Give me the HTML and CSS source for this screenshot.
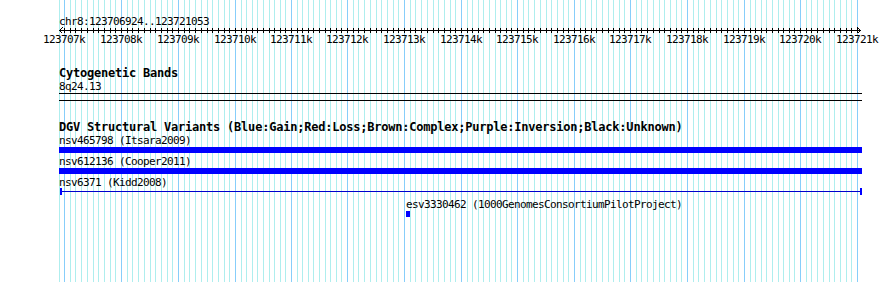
FILE: index.html
```html
<!DOCTYPE html>
<html lang="en">
<head>
    <meta charset="UTF-8">
    <title>chr8:123706924..123721053</title>
    <link rel="stylesheet" href="styles.css">
</head>
<body>
    <div class="panel">
        <!-- grid lines are drawn by script.js -->
        <svg class="grid" id="grid" width="890" height="282"></svg>

        <div class="tracks">
            <div class="track ruler">
                <div class="label">chr8:123706924..123721053</div>
                <svg class="axis" id="axis" width="803" height="7"></svg>
                <div class="scale" id="scale"></div>
            </div>

            <div class="track">
                <div class="title">Cytogenetic Bands</div>
                <div class="label">8q24.13</div>
                <div class="band"></div>
            </div>

            <div class="track">
                <div class="title">DGV Structural Variants (Blue:Gain;Red:Loss;Brown:Complex;Purple:Inversion;Black:Unknown)</div>

                <div class="feature">
                    <div class="label">nsv465798 (Itsara2009)</div>
                    <div class="bar"></div>
                </div>

                <div class="feature">
                    <div class="label">nsv612136 (Cooper2011)</div>
                    <div class="bar"></div>
                </div>

                <div class="feature">
                    <div class="label">nsv6371 (Kidd2008)</div>
                    <div class="span"></div>
                </div>

                <div class="feature" style="margin-left: 347px;">
                    <div class="label">esv3330462 (1000GenomesConsortiumPilotProject)</div>
                    <div class="block"></div>
                </div>
            </div>
        </div>
    </div>

    <script src="script.js"></script>
</body>
</html>
```

FILE: styles.css
```css
body {
    margin: 0;
    background: #fff;
    color: #000;
    font-family: "DejaVu Sans Mono", monospace;
}

.panel {
    position: relative;
    width: 890px;
    height: 282px;
    overflow: hidden;
}

.grid {
    position: absolute;
    top: 0;
    left: 0;
    shape-rendering: crispEdges;
}

.grid .minor {
    stroke: #aeeeee;
}

.grid .major {
    stroke: #87cefa;
}

.tracks {
    position: relative;
    width: 803px;
    margin-left: 59px;
    padding-top: 15px;
}

.label {
    font-size: 11px;
    letter-spacing: -0.62px;
    line-height: 13px;
    height: 13px;
    white-space: nowrap;
}

.title {
    font-size: 12px;
    font-weight: bold;
    letter-spacing: -0.22px;
    line-height: 13px;
    height: 13px;
    white-space: nowrap;
}

.track + .track {
    margin-top: 21px;
}

.track + .track + .track {
    margin-top: 20px;
}

/* ruler */
.axis {
    display: block;
    margin-top: -1px;
    overflow: visible;
    shape-rendering: crispEdges;
}

.axis line,
.axis polyline {
    stroke: #000;
    stroke-width: 1;
    fill: none;
}

.scale {
    position: relative;
    height: 13px;
    margin-top: -1px;
    font-size: 11px;
    letter-spacing: -0.62px;
    line-height: 13px;
}

.scale span {
    position: absolute;
    top: 0;
    white-space: nowrap;
}

/* cytoband */
.band {
    height: 8px;
    box-sizing: border-box;
    border-top: 1px solid #000;
    border-bottom: 1px solid #000;
}

/* variants */
.feature {
    margin-bottom: 2px;
}

.bar {
    height: 6px;
    background: #00f;
}

.span {
    position: relative;
    height: 7px;
    width: 802px;
    margin: -1px 0 3px 1px;
    box-sizing: border-box;
    border-left: 2px solid #00f;
    border-right: 2px solid #00f;
}

.span::before {
    content: "";
    position: absolute;
    left: 0;
    right: 0;
    top: 3px;
    height: 1px;
    background: #00c;
}

.block {
    width: 4px;
    height: 6px;
    background: #00f;
}
```

FILE: script.js
```js
const ns = 'http://www.w3.org/2000/svg';
const trackLeft = 59;
const firstKb = 123707;

// pixel columns of the 1k marks
const majors = [64, 121, 178, 235, 291, 347, 404, 461, 517, 574, 630, 687, 744, 800, 857];

const minors = [59];
for (let i = 0; i < majors.length - 1; i++) {
    const a = majors[i];
    const b = majors[i + 1];
    for (let j = 1; j < 10; j++) {
        minors.push(Math.round(a + (b - a) * j / 10));
    }
}

function addLine(svg, x1, y1, x2, y2, cls) {
    const el = document.createElementNS(ns, 'line');
    el.setAttribute('x1', x1);
    el.setAttribute('y1', y1);
    el.setAttribute('x2', x2);
    el.setAttribute('y2', y2);
    if (cls) el.setAttribute('class', cls);
    svg.appendChild(el);
}

// background grid
const grid = document.getElementById('grid');
minors.forEach(x => addLine(grid, x + 0.5, 0, x + 0.5, 282, 'minor'));
majors.forEach(x => addLine(grid, x + 0.5, 0, x + 0.5, 282, 'major'));

// axis with ticks and arrows
const axis = document.getElementById('axis');
addLine(axis, 0, 3.5, 802, 3.5);
minors.slice(1).concat(majors).forEach(x => {
    const lx = x - trackLeft + 0.5;
    addLine(axis, lx, 1, lx, 6);
});

function addArrow(points) {
    const el = document.createElementNS(ns, 'polyline');
    el.setAttribute('points', points);
    axis.appendChild(el);
}
addArrow('3.5,0.5 0.5,3.5 3.5,6.5');
addArrow('798.5,0.5 801.5,3.5 798.5,6.5');

// scale labels
const scale = document.getElementById('scale');
majors.forEach((x, i) => {
    const span = document.createElement('span');
    span.textContent = (firstKb + i) + 'k';
    span.style.left = (x - trackLeft - 21) + 'px';
    scale.appendChild(span);
});
```
